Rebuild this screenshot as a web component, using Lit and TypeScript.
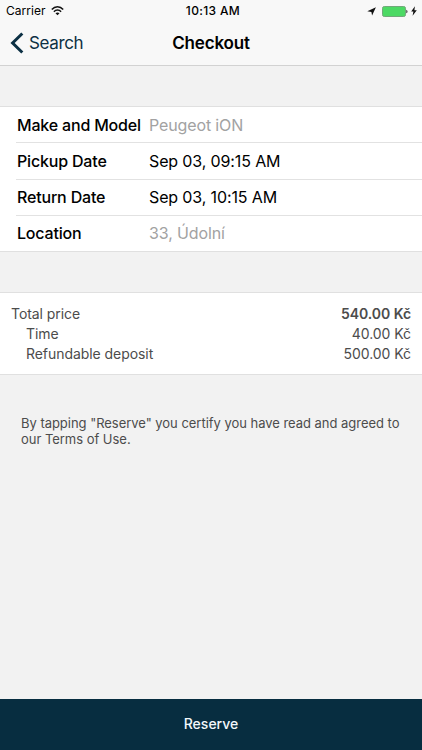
import { LitElement, html, css } from "lit";
import { customElement } from "lit/decorators.js";

@customElement("app-root")
export class AppRoot extends LitElement {
  static styles = css`
    :host {
      display: flex;
      flex-direction: column;
      height: 750px;
      background: #f2f2f2;
      color: #000;
      font-family: Inter, "Liberation Sans", sans-serif;
      font-size: 17px;
      overflow: hidden;
    }
    * { box-sizing: border-box; }
    header {
      height: 66px;
      background: #f8f8f8;
      border-bottom: 1px solid #d2d2d2;
    }
    .status, .nav {
      display: grid;
      grid-template-columns: 1fr auto 1fr;
      align-items: center;
    }
    .status {
      height: 21px;
      padding: 1px 5px 0 6px;
      font-size: 12px;
      line-height: 20px;
    }
    .status > div { display: flex; align-items: center; }
    .carrier { gap: 5px; letter-spacing: 0.05px; }
    .clock { font-weight: 500; letter-spacing: 0.35px; font-size: 12px; padding-left: 3px; }
    .power { justify-content: flex-end; }
    .power .battery { margin: 0 3px 0 6px; }
    .nav {
      height: 44px;
      padding: 0 10px;
      line-height: 44px;
    }
    .back {
      display: flex;
      align-items: center;
      gap: 5px;
      color: #0c3044;
      letter-spacing: -0.35px;
    }
    .title { font-weight: 600; letter-spacing: -0.15px; }
    svg { display: block; flex: none; }
    .panel {
      background: #fff;
      border-top: 1px solid #e0e0e0;
      border-bottom: 1px solid #e0e0e0;
    }
    .details { margin-top: 40px; height: 146px; padding-left: 16px; }
    .row {
      display: flex;
      height: 36.33px;
      line-height: 35px;
      border-bottom: 1px solid #e2e2e2;
    }
    .row:nth-child(-n + 2) { line-height: 36px; }
    .row:last-child { border-bottom: 0; }
    .label { width: 133px; padding-left: 1px; font-weight: 500; font-size: 16px; letter-spacing: -0.18px; white-space: nowrap; }
    .value { font-size: 16px; letter-spacing: -0.13px; }
    .muted { color: #a2a2a2; }
    .prices {
      margin-top: 40px;
      height: 83px;
      padding: 10.5px 11px 0 11px;
      font-size: 14px;
      letter-spacing: -0.06px;
      line-height: 20.4px;
      color: #4c4c4c;
    }
    .price { display: flex; justify-content: space-between; }
    .sub { padding-left: 15px; }
    .strong { font-weight: 600; }
    .terms {
      margin: 41px 21px 0;
      font-size: 13px;
      letter-spacing: -0.03px;
      line-height: 15.5px;
      color: #4c4c4c;
      white-space: nowrap;
    }
    .reserve {
      margin-top: auto;
      height: 51px;
      background: #072d40;
      color: #f3f8fb;
      font-size: 14px;
      line-height: 50px;
      text-align: center;
      font-weight: 500;
    }
  `;

  private details = [
    { label: "Make and Model", value: "Peugeot iON", muted: true },
    { label: "Pickup Date", value: "Sep 03, 09:15 AM", muted: false },
    { label: "Return Date", value: "Sep 03, 10:15 AM", muted: false },
    { label: "Location", value: "33, Údolní", muted: true },
  ];

  render() {
    return html`
      <header>
        <div class="status">
          <div class="carrier">
            <span>Carrier</span>
            <svg width="13" height="10" viewBox="0 0 13 10" fill="none" stroke="#111" stroke-width="1.5">
              <path d="M.8 3.6C4-.1 9-.1 12.2 3.6M2.9 5.7c2-2.2 5.2-2.2 7.2 0"></path>
              <path d="M4.5 7.2c1.1-1.1 2.9-1.1 4 0l-2 2.1z" fill="#111" stroke="none"></path>
            </svg>
          </div>
          <div class="clock">10:13 AM</div>
          <div class="power">
            <svg width="9" height="9" viewBox="0 0 9 9"><path d="M8.9.2 5.1 8.6 4.4 4.9.3 4.2z" fill="#111"></path></svg>
            <svg class="battery" width="26" height="11" viewBox="0 0 26 11">
              <rect x=".5" y=".5" width="23" height="10" rx="1.8" fill="#4cd964" stroke="#72a87a"></rect>
              <path d="M24.3 3.7c1.6.4 1.6 3.2 0 3.6z" fill="#333"></path>
            </svg>
            <svg width="6" height="10" viewBox="0 0 6 10"><path d="M3.9.2.2 5.4h2.2L1.6 9.8 5.8 4.2H3.4z" fill="#111"></path></svg>
          </div>
        </div>
        <div class="nav">
          <div class="back">
            <svg width="14" height="22" viewBox="0 0 14 22" fill="none" stroke="#0c3044" stroke-width="3"><path d="M12.3 1.5 2.6 11l9.7 9.5"></path></svg>
            <span>Search</span>
          </div>
          <div class="title">Checkout</div>
        </div>
      </header>
      <section class="panel details">
        ${this.details.map(
          (d) => html`<div class="row">
            <span class="label">${d.label}</span><span class="value ${d.muted ? "muted" : ""}">${d.value}</span>
          </div>`
        )}
      </section>
      <section class="panel prices">
        <div class="price"><span>Total price</span><span class="strong">540.00 Kč</span></div>
        <div class="price"><span class="sub">Time</span><span>40.00 Kč</span></div>
        <div class="price"><span class="sub">Refundable deposit</span><span>500.00 Kč</span></div>
      </section>
      <div class="terms">By tapping "Reserve" you certify you have read and agreed to<br />our Terms of Use.</div>
      <div class="reserve">Reserve</div>
    `;
  }
}
